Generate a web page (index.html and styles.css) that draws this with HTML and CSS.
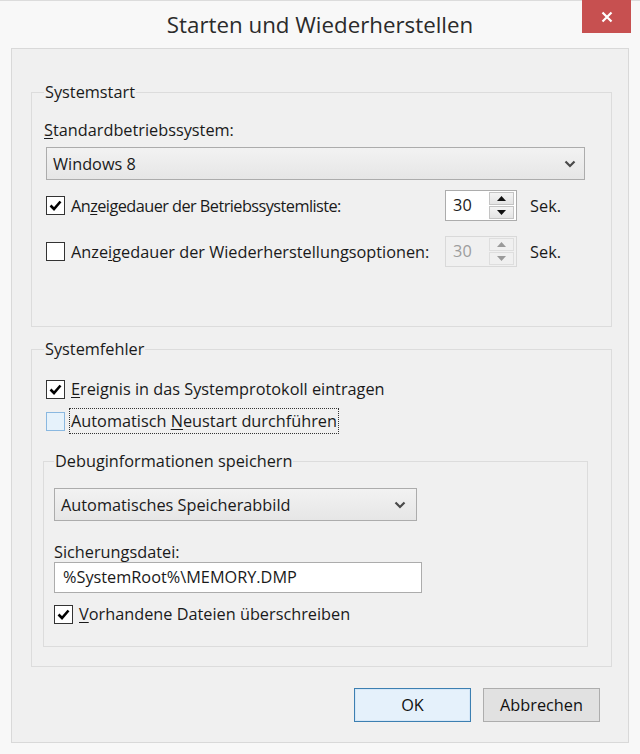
FILE: index.html
```html
<!DOCTYPE html>
<html lang="de">
<head>
<meta charset="utf-8">
<title>Starten und Wiederherstellen</title>
<link rel="stylesheet" href="styles.css">
</head>
<body>
<div class="window">
  <div class="titlebar">
    <span class="title-spacer"></span>
    <h1 class="title">Starten und Wiederherstellen</h1>
    <div class="close"><svg width="12" height="12" viewBox="0 0 12 12"><path d="M1.5 1.5 L10.5 10.5 M10.5 1.5 L1.5 10.5" stroke="#fff" stroke-width="2.2" fill="none"/></svg></div>
  </div>
  <div class="panel">
    <fieldset class="group group-start">
      <legend><span>Systemstart</span></legend>
      <div class="field-label"><u>S</u>tandardbetriebssystem:</div>
      <div class="select select-os">
        <span>Windows 8</span>
        <svg class="chev" width="12" height="8" viewBox="0 0 12 8"><polyline points="1.5,1.5 6,6 10.5,1.5" fill="none" stroke="#4a4a4a" stroke-width="2.2"/></svg>
      </div>
      <div class="row row-spin row-first">
        <span class="cb"><svg width="17" height="17" viewBox="0 0 17 17"><path d="M3.5 8.5 L7 12 L13.5 4.5" fill="none" stroke="#000" stroke-width="2.6"/></svg></span>
        <span class="row-text text-tight">An<u>z</u>eigedauer der Betriebssystemliste:</span>
        <div class="spin">
          <span class="spin-val">30</span>
          <span class="spin-btns">
            <span class="spin-btn"><svg width="9" height="5" viewBox="0 0 9 5"><polygon points="0,5 4.5,0 9,5" fill="#111"/></svg></span>
            <span class="spin-btn"><svg width="9" height="5" viewBox="0 0 9 5"><polygon points="0,0 4.5,5 9,0" fill="#111"/></svg></span>
          </span>
        </div>
        <span class="unit">Sek.</span>
      </div>
      <div class="row row-spin row-second">
        <span class="cb"></span>
        <span class="row-text">Anze<u>i</u>gedauer der Wiederherstellungsoptionen:</span>
        <div class="spin disabled">
          <span class="spin-val">30</span>
          <span class="spin-btns">
            <span class="spin-btn"><svg width="9" height="5" viewBox="0 0 9 5"><polygon points="0,5 4.5,0 9,5" fill="#9a9a9a"/></svg></span>
            <span class="spin-btn"><svg width="9" height="5" viewBox="0 0 9 5"><polygon points="0,0 4.5,5 9,0" fill="#9a9a9a"/></svg></span>
          </span>
        </div>
        <span class="unit">Sek.</span>
      </div>
    </fieldset>

    <fieldset class="group group-error">
      <legend><span>Systemfehler</span></legend>
      <div class="row row-check row-event">
        <span class="cb"><svg width="17" height="17" viewBox="0 0 17 17"><path d="M3.5 8.5 L7 12 L13.5 4.5" fill="none" stroke="#000" stroke-width="2.6"/></svg></span>
        <span class="row-text"><u>E</u>reignis in das Systemprotokoll eintragen</span>
      </div>
      <div class="row row-check row-restart">
        <span class="cb hover"></span>
        <span class="row-text focus">Automatisch <u>N</u>eustart durchführen</span>
      </div>

      <fieldset class="group group-debug">
        <legend><span>Debuginformationen speichern</span></legend>
        <div class="select select-dump">
          <span>Automatisches Speicherabbild</span>
          <svg class="chev" width="12" height="8" viewBox="0 0 12 8"><polyline points="1.5,1.5 6,6 10.5,1.5" fill="none" stroke="#4a4a4a" stroke-width="2.2"/></svg>
        </div>
        <div class="field-label label-file">Sicherungsdatei:</div>
        <div class="textbox">%SystemRoot%\MEMORY.DMP</div>
        <div class="row row-check row-overwrite">
          <span class="cb"><svg width="17" height="17" viewBox="0 0 17 17"><path d="M3.5 8.5 L7 12 L13.5 4.5" fill="none" stroke="#000" stroke-width="2.6"/></svg></span>
          <span class="row-text"><u>V</u>orhandene Dateien überschreiben</span>
        </div>
      </fieldset>
    </fieldset>

    <div class="buttons">
      <div class="btn btn-default">OK</div>
      <div class="btn">Abbrechen</div>
    </div>
  </div>
</div>
</body>
</html>
```

FILE: styles.css
```css
* { box-sizing: border-box; }
html, body { margin: 0; padding: 0; }
body {
  width: 640px;
  height: 754px;
  background: #f7f7f7;
  font-family: "Open Sans", "Noto Sans", "Liberation Sans", sans-serif;
  font-size: 16.3px;
  color: #1a1a1a;
  overflow: hidden;
}
u { text-decoration-thickness: 1px; text-underline-offset: 2px; }

.window {
  width: 640px;
  height: 754px;
  display: flex;
  flex-direction: column;
  padding: 0 11px 11px 11px;
  background: #f8f8f8;
  border-top: 1px solid #dcdcdc;
}

.titlebar {
  height: 47px;
  display: grid;
  grid-template-columns: 1fr auto 1fr;
  align-items: start;
}
.title {
  margin: 0;
  padding-top: 9px;
  font-weight: normal;
  font-size: 22.3px;
  line-height: 30px;
  color: #2b2b2b;
}
.close {
  justify-self: end;
  margin-top: -1px;
  width: 49px;
  height: 33px;
  margin-right: -2px;
  background: #c75050;
  display: flex;
  align-items: center;
  justify-content: center;
}

.panel {
  flex: 1;
  background: #f0f0f0;
  border: 1px solid #d9d9d9;
  padding: 33px 16px 0 19px;
  display: flex;
  flex-direction: column;
}

.group {
  margin: 0;
  border: 1px solid #dcdcdc;
  border-radius: 0;
  padding: 0 0 0 12px;
  min-width: 0;
}
.group legend {
  padding: 0 1px;
  line-height: 20px;
  height: 20px;
  color: #1a1a1a;
}

.group-start { padding-bottom: 59px; }
.group-error { margin-top: 12px; padding-bottom: 19px; }
.group-debug {
  margin: 18px 23px 0 -1px;
  padding: 0 0 20px 10px;
}

.field-label {
  line-height: 20px;
  margin-top: 18px;
}
.label-file { margin-top: 21px; }

.select {
  height: 33px;
  border: 1px solid #acacac;
  background: linear-gradient(#f2f2f2, #e6e6e6);
  display: flex;
  align-items: center;
  justify-content: space-between;
  padding: 0 8px 0 6px;
}
.select-os { margin: 7px 26px 0 2px; }
.select-dump { margin: 17px 0 0 0; width: 363px; }
.select-dump .chev { margin-right: 2px; }

.textbox {
  width: 368px;
  height: 31px;
  border: 1px solid #acacac;
  background: #fff;
  padding: 0 8px;
  line-height: 29px;
}

.row {
  display: flex;
  align-items: center;
}
.row-spin { height: 31px; }
.row-first { margin-top: 10px; }
.row-second { margin-top: 15px; }
.row-check { height: 24px; }
.row-event { margin-top: 18px; }
.row-restart { margin-top: 8px; }
.row-overwrite { margin-top: 9px; }

.cb {
  width: 19px;
  height: 19px;
  flex: none;
  border: 1px solid #333;
  background: #fff;
  margin: 0 6px 0 2px;
  display: flex;
  align-items: center;
  justify-content: center;
}
.group-debug .cb { margin-left: 0; }
.cb.hover {
  border-color: #8ab8e0;
  background: #e6f2fb;
}
.row-text {
  line-height: 20px;
  white-space: nowrap;
}
.text-tight { letter-spacing: -0.55px; }
.row-text.focus {
  outline: 1px dotted #333;
  outline-offset: 0;
  padding: 2px 1px 2px 1px;
  margin-left: -1px;
}

.spin {
  margin-left: auto;
  width: 72px;
  height: 31px;
  border: 1px solid #acacac;
  background: #fff;
  display: flex;
  align-items: stretch;
}
.spin-val {
  flex: 1;
  padding-left: 7px;
  line-height: 29px;
}
.spin-btns {
  width: 27px;
  display: flex;
  flex-direction: column;
  padding: 1px 2px 1px 0;
  gap: 1px;
}
.spin-btn {
  flex: 1;
  display: flex;
  align-items: center;
  justify-content: center;
  background: linear-gradient(#f4f4f4, #e4e4e4);
  border: 1px solid #c4c4c4;
}
.spin.disabled {
  background: #f0f0f0;
  border-color: #d9d9d9;
}
.spin.disabled .spin-val { color: #9d9d9d; }
.spin.disabled .spin-btn {
  background: #f0f0f0;
  border-color: #dedede;
}
.unit {
  margin: 0 50px 0 13px;
}

.buttons {
  display: flex;
  justify-content: flex-end;
  gap: 12px;
  margin: 21px 12px 0 0;
}
.btn {
  width: 117px;
  height: 34px;
  border: 1px solid #adadad;
  background: #e1e1e1;
  display: flex;
  align-items: center;
  justify-content: center;
  color: #111;
}
.btn-default {
  border-color: #3c7fb1;
  background: #e5f1fb;
  box-shadow: inset 0 0 0 1px #d5e7f7;
}
```
